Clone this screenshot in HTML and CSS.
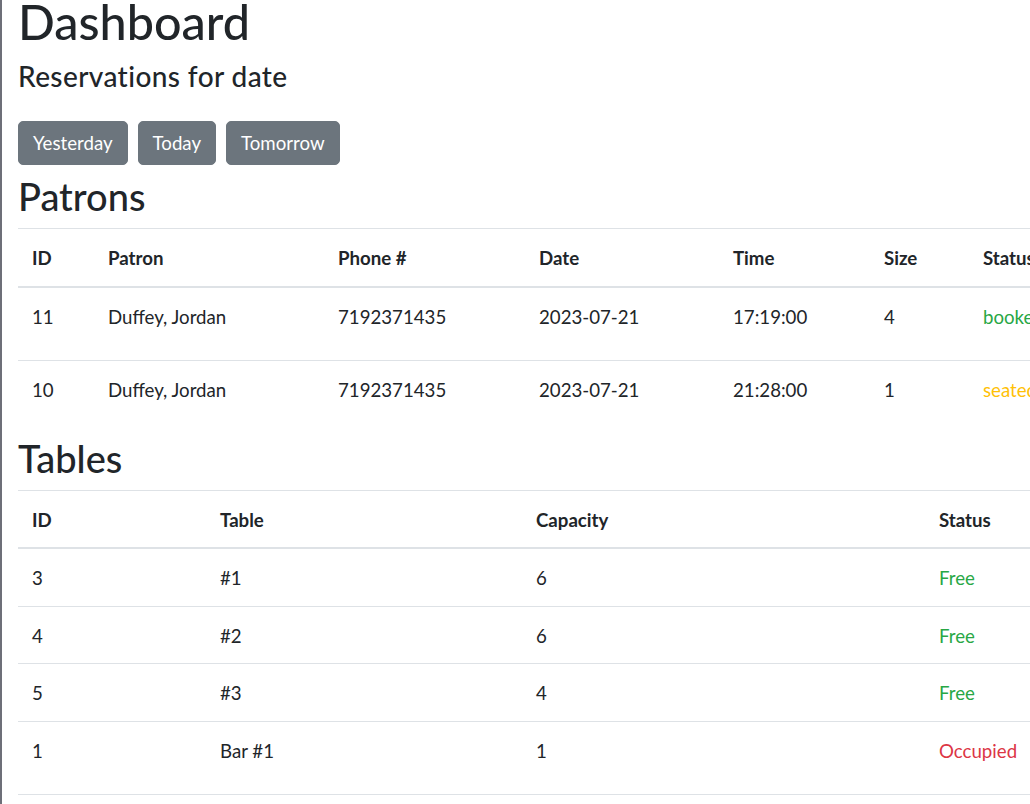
FILE: index.html
```html
<!DOCTYPE html>
<html lang="en">
<head>
<meta charset="utf-8">
<title>Dashboard</title>
<link rel="stylesheet" href="styles.css">
</head>
<body>
<main class="page">
  <h1 class="title">Dashboard</h1>
  <h4 class="subtitle">Reservations for date</h4>
  <div class="date-nav">
    <button class="btn" type="button">Yesterday</button>
    <button class="btn" type="button">Today</button>
    <button class="btn" type="button">Tomorrow</button>
  </div>

  <h2 class="section-title">Patrons</h2>
  <table class="table patrons">
    <colgroup>
      <col class="c-76"><col class="c-230"><col class="c-201"><col class="c-194"><col class="c-151"><col class="c-99"><col class="c-130"><col class="c-260">
    </colgroup>
    <thead>
      <tr><th>ID</th><th>Patron</th><th>Phone #</th><th>Date</th><th>Time</th><th>Size</th><th>Status</th><th>Actions</th></tr>
    </thead>
    <tbody>
      <tr><td>11</td><td>Duffey, Jordan</td><td>7192371435</td><td>2023-07-21</td><td>17:19:00</td><td>4</td><td class="st-green">booked</td><td><button class="btn" type="button">Seat</button></td></tr>
      <tr><td>10</td><td>Duffey, Jordan</td><td>7192371435</td><td>2023-07-21</td><td>21:28:00</td><td>1</td><td class="st-yellow">seated</td><td><button class="btn" type="button">Edit</button></td></tr>
    </tbody>
  </table>

  <h2 class="section-title">Tables</h2>
  <table class="table tables">
    <colgroup>
      <col class="c-188"><col class="c-316"><col class="c-403"><col class="c-150"><col class="c-150">
    </colgroup>
    <thead>
      <tr><th>ID</th><th>Table</th><th>Capacity</th><th>Status</th><th>Actions</th></tr>
    </thead>
    <tbody>
      <tr><td>3</td><td>#1</td><td>6</td><td class="st-green">Free</td><td></td></tr>
      <tr><td>4</td><td>#2</td><td>6</td><td class="st-green">Free</td><td></td></tr>
      <tr><td>5</td><td>#3</td><td>4</td><td class="st-green">Free</td><td></td></tr>
      <tr><td>1</td><td>Bar #1</td><td>1</td><td class="st-red">Occupied</td><td><button class="btn" type="button">Finish</button></td></tr>
    </tbody>
  </table>
</main>
</body>
</html>
```

FILE: styles.css
```css
html, body {
  margin: 0;
  padding: 0;
  background: #fff;
}
body {
  font-family: Lato, "Noto Sans", sans-serif;
  color: #212529;
  font-size: 18.67px;
  line-height: 28.5px;
  overflow: hidden;
}
.page {
  box-sizing: border-box;
  min-height: 100vh;
  border-left: 2px solid #6d6f78;
  padding-left: 16px;
  overflow: hidden;
}
.title {
  margin: 0;
  font-size: 48.5px;
  line-height: 42px;
  font-weight: 500;
}
.subtitle {
  margin: 18px 0 0;
  font-size: 28px;
  line-height: 32px;
  font-weight: 500;
  letter-spacing: 0.4px;
}
.date-nav {
  display: flex;
  gap: 10px;
  margin-top: 29px;
}
.btn {
  font-family: inherit;
  font-size: 18.67px;
  line-height: 28px;
  padding: 7px 14px;
  border: 1px solid #6c757d;
  border-radius: 5px;
  background: #6c757d;
  color: #fff;
  cursor: pointer;
  vertical-align: top;
}
.section-title {
  margin: 9px 0 10px;
  font-size: 38px;
  line-height: 44px;
  font-weight: 500;
}
.table + .section-title {
  margin-top: 3px;
}
.table {
  border-collapse: collapse;
  table-layout: fixed;
}
.patrons { width: 1341px; }
.tables { width: 1207px; border-bottom: 1px solid #dee2e6; }
.c-76 { width: 76px; }
.c-230 { width: 230px; }
.c-201 { width: 201px; }
.c-194 { width: 194px; }
.c-151 { width: 151px; }
.c-99 { width: 99px; }
.c-130 { width: 130px; }
.c-260 { width: 260px; }
.c-188 { width: 188px; }
.c-316 { width: 316px; }
.c-403 { width: 403px; }
.c-150 { width: 150px; }
.table th,
.table td {
  padding: 15px 14px 13px;
  text-align: left;
  vertical-align: top;
  border-top: 1px solid #dee2e6;
  white-space: nowrap;
}
.table th {
  font-weight: 700;
  border-bottom: 2px solid #dee2e6;
}
.st-green { color: #28a745; }
.st-yellow { color: #ffc107; }
.st-red { color: #dc3545; }
```
